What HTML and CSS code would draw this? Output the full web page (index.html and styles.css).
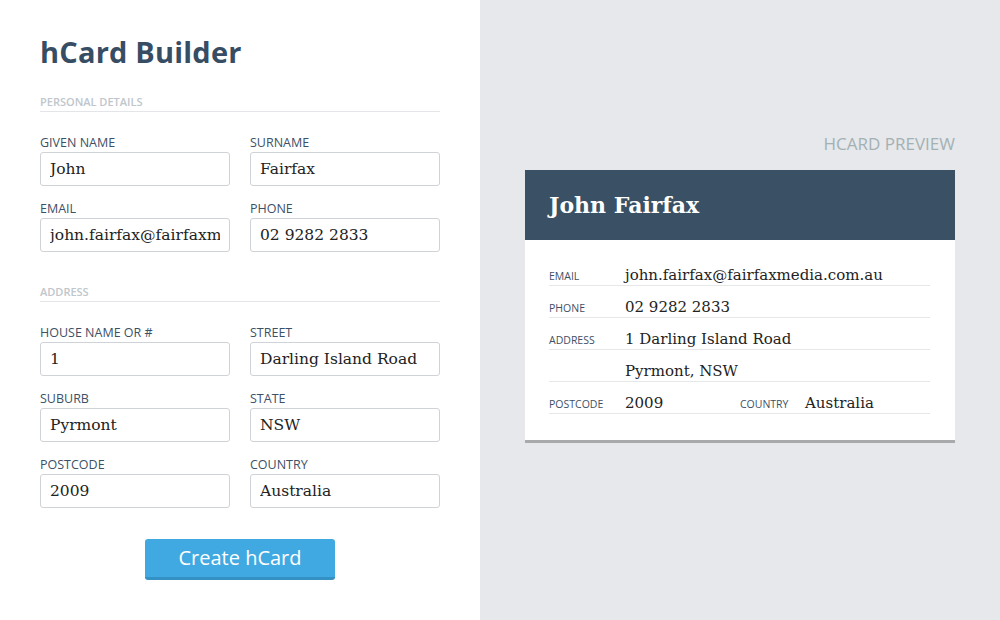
FILE: index.html
```html
<!DOCTYPE html>
<html lang="en">
<head>
<meta charset="utf-8">
<title>hCard Builder</title>
<link rel="stylesheet" href="styles.css">
</head>
<body>
<div class="app">
  <section class="builder">
    <h1 class="title">hCard Builder</h1>
    <div class="group personal">
      <div class="group-title">PERSONAL DETAILS</div>
      <div class="fields">
        <label class="field"><span class="field-label">GIVEN NAME</span><input class="input" type="text" value="John"></label>
        <label class="field"><span class="field-label">SURNAME</span><input class="input" type="text" value="Fairfax"></label>
        <label class="field"><span class="field-label">EMAIL</span><input class="input" type="text" value="john.fairfax@fairfaxmedia.com.au"></label>
        <label class="field"><span class="field-label">PHONE</span><input class="input" type="text" value="02 9282 2833"></label>
      </div>
    </div>
    <div class="group address">
      <div class="group-title">ADDRESS</div>
      <div class="fields">
        <label class="field"><span class="field-label">HOUSE NAME OR #</span><input class="input" type="text" value="1"></label>
        <label class="field"><span class="field-label">STREET</span><input class="input" type="text" value="Darling Island Road"></label>
        <label class="field"><span class="field-label">SUBURB</span><input class="input" type="text" value="Pyrmont"></label>
        <label class="field"><span class="field-label">STATE</span><input class="input" type="text" value="NSW"></label>
        <label class="field"><span class="field-label">POSTCODE</span><input class="input" type="text" value="2009"></label>
        <label class="field"><span class="field-label">COUNTRY</span><input class="input" type="text" value="Australia"></label>
      </div>
    </div>
    <div class="actions">
      <button class="btn" type="button">Create hCard</button>
    </div>
  </section>
  <section class="preview">
    <div class="preview-title">HCARD PREVIEW</div>
    <div class="card">
      <div class="card-head">John Fairfax</div>
      <div class="card-body">
        <div class="row"><span class="row-label">EMAIL</span><span class="row-value">john.fairfax@fairfaxmedia.com.au</span></div>
        <div class="row"><span class="row-label">PHONE</span><span class="row-value">02 9282 2833</span></div>
        <div class="row"><span class="row-label">ADDRESS</span><span class="row-value">1 Darling Island Road</span></div>
        <div class="row"><span class="row-label"></span><span class="row-value">Pyrmont, NSW</span></div>
        <div class="row">
          <span class="row-label">POSTCODE</span><span class="row-value short">2009</span>
          <span class="row-label narrow">COUNTRY</span><span class="row-value">Australia</span>
        </div>
      </div>
    </div>
  </section>
</div>
</body>
</html>
```

FILE: styles.css
```css
* { box-sizing: border-box; }
html, body { margin: 0; padding: 0; }
body {
  font-family: "Open Sans", "Noto Sans", sans-serif;
  color: #34495e;
  background: #e6e8ec;
}
.app {
  display: flex;
  width: 1000px;
  height: 620px;
}
.builder {
  width: 480px;
  background: #ffffff;
  padding: 30px 40px 0 40px;
}
.title {
  margin: 0;
  font-size: 29px;
  line-height: 44px;
  font-weight: 700;
  color: #374d63;
  letter-spacing: 0.2px;
}
.group.personal { margin-top: 21px; }
.group.address { margin-top: 33px; }
.group-title {
  font-size: 11px;
  line-height: 14px;
  font-weight: 600;
  color: #c0c6cc;
  padding-bottom: 2px;
  border-bottom: 1px solid #e3e5e8;
}
.fields {
  display: grid;
  grid-template-columns: 190px 190px;
  column-gap: 20px;
  row-gap: 12px;
  margin-top: 20px;
}
.field { display: flex; flex-direction: column; }
.field-label {
  font-size: 12.5px;
  line-height: 22px;
  color: #3d5066;
  margin-bottom: -2px;
}
.input {
  display: block;
  width: 100%;
  height: 34px;
  margin: 0;
  border: 1px solid #cfd2d6;
  border-radius: 3px;
  padding: 0 9px;
  background: #ffffff;
  font-family: "DejaVu Serif", "Liberation Serif", serif;
  font-size: 15.5px;
  line-height: 32px;
  color: #222;
  outline: none;
}
.actions {
  display: flex;
  justify-content: center;
  margin-top: 31px;
}
.btn {
  width: 190px;
  height: 41px;
  border: 0;
  border-bottom: 3px solid #3590c4;
  border-radius: 3px;
  background: #41a9e1;
  color: #ffffff;
  font-family: "Open Sans", "Noto Sans", sans-serif;
  font-size: 20px;
  line-height: 38px;
  padding: 0;
}
.preview {
  flex: 1;
  padding: 133px 45px 0 45px;
}
.preview-title {
  text-align: right;
  font-size: 17px;
  line-height: 22px;
  color: #a3b1b3;
  margin-bottom: 15px;
}
.card {
  background: #ffffff;
  border-bottom: 3px solid #a8a9ab;
}
.card-head {
  height: 70px;
  background: #3a5064;
  color: #ffffff;
  font-family: "DejaVu Serif", "Liberation Serif", serif;
  font-weight: 700;
  font-size: 22px;
  line-height: 70px;
  padding-left: 24px;
}
.card-body { padding: 14px 25px 26px 24px; }
.row {
  display: flex;
  align-items: baseline;
  height: 32px;
  padding-top: 12px;
  border-bottom: 1px solid #e6e7e9;
}
.row-label {
  width: 76px;
  font-size: 10.5px;
  color: #3d5066;
  flex: none;
}
.row-label.narrow { width: 65px; }
.row-value {
  font-family: "DejaVu Serif", "Liberation Serif", serif;
  font-size: 15px;
  color: #222;
}
.row-value.short { width: 115px; }
```
